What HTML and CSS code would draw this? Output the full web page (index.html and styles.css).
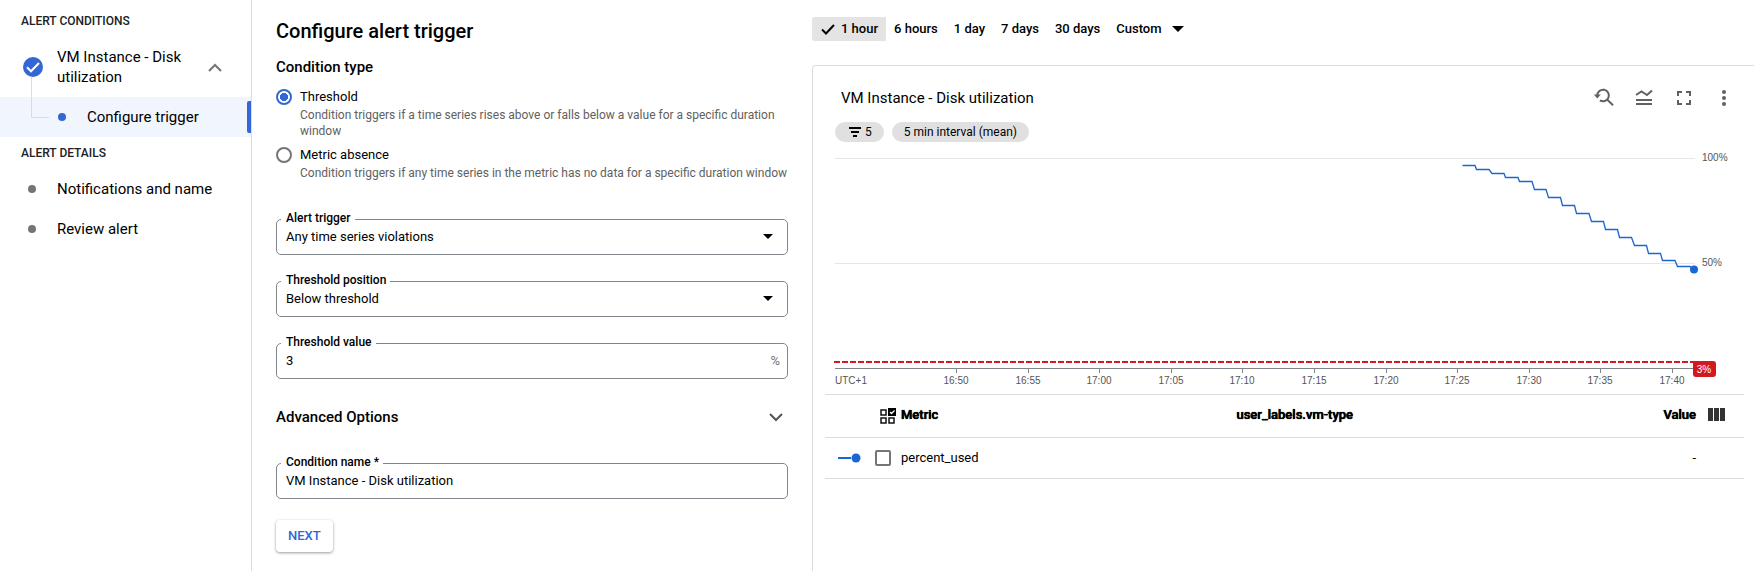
FILE: index.html
```html
<!DOCTYPE html>
<html lang="en">
<head>
<meta charset="utf-8">
<meta name="viewport" content="width=device-width, initial-scale=1">
<title>Configure alert trigger</title>
<link rel="stylesheet" href="styles.css">
</head>
<body>
<div class="page">
  <nav class="sidebar" aria-label="Alert steps">
    <h2 class="nav-heading">ALERT CONDITIONS</h2>
    <div class="nav-item nav-parent">
      <svg class="nav-check" width="20" height="20" viewBox="0 0 20 20" aria-hidden="true"><circle cx="10" cy="10" r="10" fill="#3367d6"/><path d="M4 10.3l4 4 8-8.3" fill="none" stroke="#fff" stroke-width="2"/></svg>
      <a class="nav-text" href="#condition">VM Instance - Disk utilization</a>
      <button class="icon-button" type="button" aria-label="Collapse"><svg width="14" height="9" viewBox="0 0 14 9"><path d="M1 8l6-6 6 6" fill="none" stroke="#757575" stroke-width="2"/></svg></button>
    </div>
    <div class="nav-item nav-child">
      <span class="dot dot-blue"></span>
      <a class="nav-text" href="#trigger">Configure trigger</a>
    </div>
    <h2 class="nav-heading">ALERT DETAILS</h2>
    <div class="nav-item"><span class="dot"></span><a class="nav-text" href="#notifications">Notifications and name</a></div>
    <div class="nav-item"><span class="dot"></span><a class="nav-text" href="#review">Review alert</a></div>
  </nav>

  <form class="form">
    <h1 class="title">Configure alert trigger</h1>
    <h2 class="subtitle" id="type-label">Condition type</h2>
    <div class="radios" role="radiogroup" aria-labelledby="type-label">
      <div class="radio-row">
        <input class="radio" type="radio" name="type" id="type-threshold" checked>
        <div>
          <label class="radio-label" for="type-threshold">Threshold</label>
          <p class="hint">Condition triggers if a time series rises above or falls below a value for a specific duration window</p>
        </div>
      </div>
      <div class="radio-row">
        <input class="radio" type="radio" name="type" id="type-absence">
        <div>
          <label class="radio-label" for="type-absence">Metric absence</label>
          <p class="hint">Condition triggers if any time series in the metric has no data for a specific duration window</p>
        </div>
      </div>
    </div>

    <div class="fields">
      <div class="field">
        <label class="field-label" for="alert-trigger">Alert trigger</label>
        <select class="control" id="alert-trigger"><option>Any time series violations</option></select>
        <svg class="caret" width="10" height="5" viewBox="0 0 10 5" aria-hidden="true"><path d="M0 0h10L5 5z"/></svg>
      </div>
      <div class="field">
        <label class="field-label" for="position">Threshold position</label>
        <select class="control" id="position"><option>Below threshold</option></select>
        <svg class="caret" width="10" height="5" viewBox="0 0 10 5" aria-hidden="true"><path d="M0 0h10L5 5z"/></svg>
      </div>
      <div class="field">
        <label class="field-label" for="value">Threshold value</label>
        <input class="control" id="value" type="text" value="3">
        <span class="suffix">%</span>
      </div>
    </div>

    <button class="advanced" type="button">
      <span>Advanced Options</span>
      <svg width="14" height="9" viewBox="0 0 14 9" aria-hidden="true"><path d="M1 1l6 6 6-6" fill="none" stroke="#555" stroke-width="2"/></svg>
    </button>

    <div class="field">
      <label class="field-label" for="name">Condition name *</label>
      <input class="control" id="name" type="text" value="VM Instance - Disk utilization">
    </div>
    <button class="next" type="button">NEXT</button>
  </form>

  <main class="preview">
    <div class="ranges">
      <button class="range range-on" type="button"><svg width="14" height="11" viewBox="0 0 14 11" aria-hidden="true"><path d="M1 5.5l4 4L13 1" fill="none" stroke="#000" stroke-width="2"/></svg>1 hour</button>
      <button class="range" type="button">6 hours</button>
      <button class="range" type="button">1 day</button>
      <button class="range" type="button">7 days</button>
      <button class="range" type="button">30 days</button>
      <button class="range range-custom" type="button">Custom<svg width="12" height="6" viewBox="0 0 12 6" aria-hidden="true"><path d="M0 0h12L6 6z"/></svg></button>
    </div>

    <section class="card">
      <header class="card-head">
        <h2 class="card-title">VM Instance - Disk utilization</h2>
        <div class="actions">
          <button class="icon-button" type="button" aria-label="Reset zoom"><svg width="24" height="24" viewBox="0 0 24 24"><path d="M5.3 9.5a5.8 5.8 0 1 1 2.6 4.8M11 15.3a5.8 5.8 0 0 0 4.2-1.7L21 19.3" fill="none" stroke="#616161" stroke-width="2"/><path d="M1.8 8.5h7L5.3 12.6z" fill="#616161"/></svg></button>
          <button class="icon-button" type="button" aria-label="Legend"><svg width="24" height="24" viewBox="0 0 24 24"><path d="M4 9l5.5-3.500L15 9l5-4.500M4 14h16M4 18h16" fill="none" stroke="#616161" stroke-width="2"/></svg></button>
          <button class="icon-button" type="button" aria-label="Full screen"><svg width="24" height="24" viewBox="0 0 24 24"><path d="M6 10V6h4M14 6h4v4M18 14v4h-4M10 18H6v-4" fill="none" stroke="#616161" stroke-width="2"/></svg></button>
          <button class="icon-button" type="button" aria-label="More options"><svg width="24" height="24" viewBox="0 0 24 24" fill="#616161"><circle cx="12" cy="6" r="2"/><circle cx="12" cy="12" r="2"/><circle cx="12" cy="18" r="2"/></svg></button>
        </div>
      </header>

      <div class="chips">
        <button class="chip" type="button"><svg width="12" height="10" viewBox="0 0 12 10" aria-hidden="true"><path d="M0 1h12M2 5h8M4 9h4" stroke="#000" stroke-width="2"/></svg>5</button>
        <button class="chip" type="button">5 min interval (mean)</button>
      </div>

      <svg class="chart" viewBox="0 0 941 242" role="img" aria-label="Disk utilization over time">
        <path d="M22 6.5h860M22 111.5h860" stroke="#e6e6e6"/>
        <path d="M22 216.5h860M143.5 217v4M215.5 217v4M286.5 217v4M358.5 217v4M429.5 217v4M501.5 217v4M573.5 217v4M644.5 217v4M716.5 217v4M787.5 217v4M859.5 217v4" fill="none" stroke="#80868b"/>
        <path d="M21 210h861" stroke="#d2191f" stroke-width="2" stroke-dasharray="6 2"/>
        <path class="series" d="M649.5 13.5H662L663.5 17.5H676L679 21.5H691L692.5 25.5H705L706.5 29.5H719L721.5 37.5H733L735.5 45.5H747.5L749.5 53.5H761.5L763.5 61.5H776L778.5 69.5H790.5L792.5 77.5H804.5L806.5 85.5H818.5L821.5 93.5H833.5L835.5 101.5H847.5L849.5 108.5H862L864.5 114.5H877L881 117.5"/>
        <circle cx="881" cy="117.5" r="4" fill="#1967d2"/>
        <g class="ticks">
          <text x="889" y="9">100%</text><text x="889" y="114">50%</text>
          <text x="22" y="232">UTC+1</text>
        </g>
        <g class="ticks" text-anchor="middle">
          <text x="143" y="232">16:50</text><text x="215" y="232">16:55</text><text x="286" y="232">17:00</text><text x="358" y="232">17:05</text><text x="429" y="232">17:10</text><text x="501" y="232">17:15</text><text x="573" y="232">17:20</text><text x="644" y="232">17:25</text><text x="716" y="232">17:30</text><text x="787" y="232">17:35</text><text x="859" y="232">17:40</text>
        </g>
        <rect x="880" y="209" width="23" height="16" rx="3" fill="#d2191f"/>
        <text class="badge" x="891" y="221" text-anchor="middle">3%</text>
      </svg>

      <table class="legend">
        <thead>
          <tr>
            <th class="col-line"></th>
            <th class="col-check"><svg width="16" height="16" viewBox="0 0 16 16" aria-hidden="true"><path d="M1 2h5v5H1zM1 10h5v5H1zM9 10h5v5H9z" fill="none" stroke="#111" stroke-width="1.5"/><path d="M8 0h8v8H8z"/><path d="M10 4l1.5 1.5L14.5 2.5" fill="none" stroke="#fff" stroke-width="1.3"/></svg></th>
            <th class="col-metric">Metric</th>
            <th>user_labels.vm-type</th>
            <th class="col-value">Value</th>
            <th class="col-menu"><button class="icon-button" type="button" aria-label="Columns"><svg width="17" height="13" viewBox="0 0 17 13"><path d="M0 0h5v13H0zM6 0h5v13H6zM12 0h5v13h-5z" fill="#333"/></svg></button></th>
          </tr>
        </thead>
        <tbody>
          <tr>
            <td class="col-line"><svg width="23" height="10" viewBox="0 0 23 10" aria-hidden="true"><path d="M0 5h13" stroke="#1967d2" stroke-width="2"/><circle cx="18" cy="5" r="4.5" fill="#1967d2"/></svg></td>
            <td class="col-check"><input class="checkbox" type="checkbox" aria-label="percent_used"></td>
            <td>percent_used</td>
            <td></td>
            <td class="col-value">-</td>
            <td></td>
          </tr>
        </tbody>
      </table>
    </section>
  </main>
</div>
</body>
</html>
```
FILE: styles.css
```css
* { box-sizing: border-box; }

body {
  margin: 0;
  background: #fff;
  color: #000;
  font: 13px/16px Roboto, Arial, sans-serif;
}

h1, h2, p { margin: 0; font-weight: 500; }
button, input, select { font: inherit; color: inherit; }
button { padding: 0; border: 0; background: none; cursor: pointer; }
svg { display: block; }
a { color: inherit; text-decoration: none; }
.icon-button { display: block; }

.page {
  display: grid;
  grid-template-columns: 252px 536px minmax(0, 1fr);
  min-height: 100vh;
}

/* Steps */
.sidebar { padding-top: 5px; border-right: 1px solid #dadce0; }
.nav-heading {
  padding-left: 21px;
  color: #212121;
  font-size: 12px;
  line-height: 32px;
}
.nav-item {
  position: relative;
  display: flex;
  align-items: center;
  min-height: 40px;
  padding-left: 28px;
  font-size: 15px;
  line-height: 20px;
}
.nav-parent { min-height: 60px; padding-left: 23px; padding-right: 29px; }
.nav-parent .nav-text { flex: 1; margin-left: 14px; }
.nav-check { flex: none; }
.nav-text { margin-left: 21px; }
.dot { width: 8px; height: 8px; border-radius: 50%; background: #757575; }
.dot-blue { background: #3367d6; }
.nav-child { padding-left: 58px; background: #f0f5fe; }
.nav-child::before {
  content: "";
  position: absolute;
  left: 31px;
  top: -20px;
  width: 17px;
  height: 40px;
  border: solid #dadce0;
  border-width: 0 0 1px 1px;
}
.nav-child::after {
  content: "";
  position: absolute;
  right: 0;
  top: 4px;
  width: 4px;
  height: 32px;
  border-radius: 2px 0 0 2px;
  background: #3367d6;
}

/* Form */
.form { padding: 19px 0 16px 24px; }
.title { font-size: 20px; line-height: 24px; }
.subtitle { margin-top: 14px; font-size: 15px; line-height: 20px; }
.radios { display: grid; gap: 8px; margin-top: 12px; }
.radio-row { display: flex; gap: 8px; }
.radio {
  appearance: none;
  flex: none;
  width: 16px;
  height: 16px;
  margin: 0;
  border: 2px solid #757575;
  border-radius: 50%;
}
.radio:checked { border-color: #3367d6; background: radial-gradient(circle, #3367d6 4px, #fff 4px); }
.radio-label { display: block; }
.hint { margin-top: 2px; color: #616161; font-size: 12px; font-weight: 400; }
.fields { display: grid; gap: 26px; margin-top: 38px; }
.field { position: relative; }
.control {
  appearance: none;
  display: block;
  width: 100%;
  height: 36px;
  padding: 0 32px 1px 9px;
  border: 1px solid #80868b;
  border-radius: 5px;
  background: #fff;
}
.field-label {
  position: absolute;
  left: 5px;
  top: -9px;
  padding: 0 4px 0 5px;
  background: #fff;
  font-size: 12px;
  font-weight: 500;
}
.caret { position: absolute; right: 15px; top: 15px; pointer-events: none; }
.suffix { position: absolute; right: 8px; top: 10px; color: #757575; }
.advanced {
  display: flex;
  align-items: center;
  justify-content: space-between;
  width: 100%;
  margin: 28px 0 36px;
  padding-right: 5px;
  font-size: 15px;
  font-weight: 500;
  line-height: 20px;
}
.next {
  height: 32px;
  margin-top: 21px;
  padding: 0 12px;
  border-radius: 4px;
  box-shadow: 0 1px 3px rgba(0, 0, 0, .4);
  color: #3367d6;
  font-weight: 500;
}

/* Preview */
.preview { display: flex; flex-direction: column; padding: 17px 0 0 24px; }
.ranges { display: flex; }
.range {
  display: flex;
  align-items: center;
  height: 24px;
  padding: 0 8px;
  font-weight: 500;
}
.range-on { gap: 6px; padding-left: 9px; border-radius: 2px 0 0 2px; background: #e4e4e4; }
.range-custom { gap: 10px; }
.card {
  flex: 1;
  margin-top: 24px;
  border: solid #dadce0;
  border-width: 1px 0 0 1px;
  border-radius: 4px 0 0 0;
}
.card-head {
  display: flex;
  align-items: center;
  justify-content: space-between;
  padding: 20px 18px 0 28px;
}
.card-title { font-size: 15px; font-weight: 400; line-height: 24px; }
.actions { display: flex; gap: 16px; }
.chips { display: flex; gap: 8px; padding: 12px 22px 10px; }
.chip {
  display: flex;
  align-items: center;
  gap: 4px;
  height: 20px;
  padding: 0 12px;
  border-radius: 10px;
  background: #e0e0e0;
  font-size: 12px;
}
.chip:first-child { padding-left: 14px; }
.chart { width: 100%; height: auto; }
.ticks { fill: #555; font: 10px "Liberation Sans", Arial, sans-serif; }
.badge { fill: #fff; font: 10px "Liberation Sans", Arial, sans-serif; }
.series { fill: none; stroke: #1967d2; stroke-width: 1.3; }

/* Legend table */
.legend {
  width: calc(100% - 22px);
  margin-left: 12px;
  border-collapse: collapse;
  border-top: 1px solid #dadce0;
  table-layout: fixed;
}
.legend tr { border-bottom: 1px solid #dadce0; }
.legend th, .legend td { padding: 0; text-align: left; }
.legend th { height: 43px; padding-bottom: 3px; font-weight: 500; text-shadow: 0 0 0 #000, 0 0 1px #000; }
.legend td { height: 41px; }
.legend .col-line { width: 50px; padding-left: 13px; }
.legend .col-check { width: 26px; }
.legend th.col-check { padding: 0 0 0 5px; }
.legend .col-metric { width: 36.5%; }
.legend .col-value { text-align: right; }
.legend .col-menu { width: 48px; padding-left: 12px; }
.checkbox {
  appearance: none;
  display: block;
  width: 16px;
  height: 16px;
  margin: 0;
  border: 2px solid #757575;
  border-radius: 2px;
}
```
